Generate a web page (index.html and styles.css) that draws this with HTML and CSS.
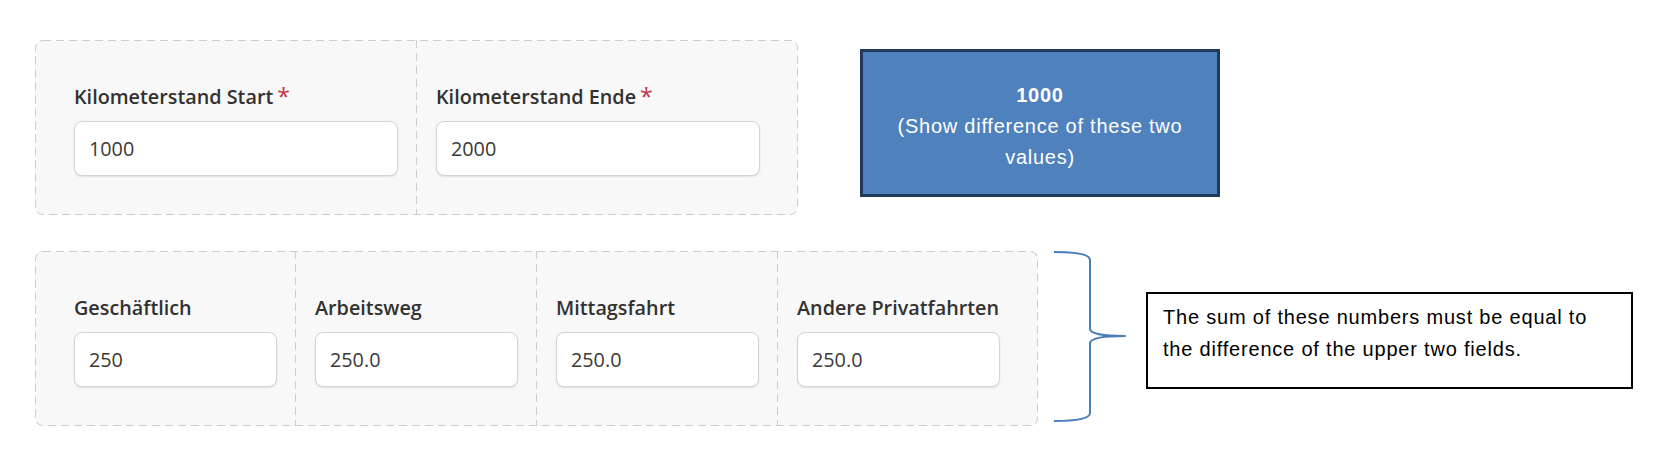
FILE: index.html
```html
<!DOCTYPE html>
<html lang="de">
<head>
<meta charset="utf-8">
<title>Kilometerstand</title>
<link rel="stylesheet" href="styles.css">
</head>
<body>
<div class="page">
  <div class="row row-top">
    <div class="panel">
      <div class="field field-wide">
        <label class="label">Kilometerstand Start<span class="req">*</span></label>
        <input class="input" type="text" value="1000" readonly>
      </div>
      <div class="field field-wide">
        <label class="label">Kilometerstand Ende<span class="req">*</span></label>
        <input class="input" type="text" value="2000" readonly>
      </div>
    </div>
    <div class="diff-box">
      <strong class="diff-value">1000</strong>
      <span class="diff-text">(Show difference of these two values)</span>
    </div>
  </div>
  <div class="row row-bottom">
    <div class="panel">
      <div class="field field-narrow">
        <label class="label">Geschäftlich</label>
        <input class="input" type="text" value="250" readonly>
      </div>
      <div class="field field-narrow">
        <label class="label">Arbeitsweg</label>
        <input class="input" type="text" value="250.0" readonly>
      </div>
      <div class="field field-narrow">
        <label class="label">Mittagsfahrt</label>
        <input class="input" type="text" value="250.0" readonly>
      </div>
      <div class="field field-narrow">
        <label class="label">Andere Privatfahrten</label>
        <input class="input" type="text" value="250.0" readonly>
      </div>
    </div>
    <svg class="brace" width="76" height="171" viewBox="0 0 76 171">
      <path d="M1,1 Q37,1 37,9 L37,78 Q38,85 72,85 Q38,85 37,92 L37,162 Q37,170 1,170" fill="none" stroke="#4a7ebb" stroke-width="2" stroke-linejoin="round"/>
    </svg>
    <div class="note">The sum of these numbers must be equal to the difference of the upper two fields.</div>
  </div>
</div>
</body>
</html>
```
FILE: styles.css
```css
* { box-sizing: border-box; }

html, body {
  margin: 0;
  padding: 0;
  background: #ffffff;
}

.page {
  padding: 40px 0 0 35px;
  font-family: "Open Sans", "Noto Sans", sans-serif;
}

.row {
  display: flex;
  align-items: flex-start;
}

.row-bottom {
  margin-top: 36px;
}

.panel {
  display: flex;
  padding: 0 20px 0 19px;
  border-radius: 8px;
  background:
    url("data:image/svg+xml,%3Csvg xmlns='http://www.w3.org/2000/svg' width='100%25' height='100%25'%3E%3Crect width='100%25' height='100%25' rx='8' ry='8' fill='none' stroke='%23cdcdcd' stroke-width='2' stroke-dasharray='8 5'/%3E%3C/svg%3E") no-repeat,
    #f8f8f8;
}

.field {
  display: flex;
  flex-direction: column;
  padding: 45px 18px 39px 20px;
}

.field + .field {
  background: repeating-linear-gradient(to bottom, #cdcdcd 0 8px, transparent 8px 13px) left top / 1px 100% no-repeat;
}

.field-wide { width: 362px; }
.field-narrow { width: 241px; }

.label {
  display: block;
  font-size: 19.8px;
  line-height: 24px;
  font-weight: 600;
  color: #323130;
  white-space: nowrap;
  margin-bottom: 12px;
}

.req {
  padding-left: 4px;
  color: #c4314b;
  font-weight: 400;
  font-size: 23px;
  line-height: 0;
  vertical-align: -1px;
}

.input {
  display: block;
  width: 100%;
  height: 55px;
  margin: 0;
  padding: 0 14px;
  border: 1px solid #d4d4d4;
  border-radius: 8px;
  background: #ffffff;
  box-shadow: 0 1px 2px rgba(0, 0, 0, 0.10);
  font-family: "Open Sans", "Noto Sans", sans-serif;
  font-size: 19.8px;
  color: #3a3938;
  outline: none;
}

.diff-box {
  width: 360px;
  height: 148px;
  margin: 9px 0 0 62px;
  padding: 7px 28px 0;
  border: 3px solid #1f3a5c;
  background: #4f81bd;
  color: #ffffff;
  font-family: "Liberation Sans", Arial, sans-serif;
  font-size: 20px;
  line-height: 31px;
  letter-spacing: 0.75px;
  text-align: center;
  display: flex;
  flex-direction: column;
  justify-content: center;
}

.diff-value {
  font-weight: 700;
}

.brace {
  display: block;
  margin-left: 15px;
  flex: none;
}

.note {
  width: 487px;
  height: 97px;
  margin: 41px 0 0 17px;
  padding: 7px 20px 0 15px;
  border: 2px solid #000000;
  color: #000000;
  font-family: "Liberation Sans", Arial, sans-serif;
  font-size: 20px;
  line-height: 32px;
  letter-spacing: 0.8px;
}
```
